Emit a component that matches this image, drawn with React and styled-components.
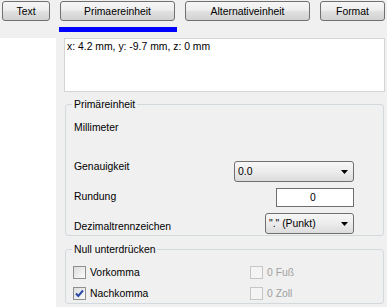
import React from 'react'
import styled, {createGlobalStyle} from 'styled-components'

const GlobalStyle = createGlobalStyle`
  html, body {
    margin: 0;
    padding: 0;
    background: #f0f0f0;
  }
  body {
    font-family: "Liberation Sans", Arial, sans-serif;
    font-size: 10.4px;
    line-height: 13px;
    color: #000;
  }
`

const Window = styled.div`
  width: 387px;
  height: 307px;
  display: flex;
  flex-direction: column;
  background: #f0f0f0;
  overflow: hidden;
`

const Header = styled.div`
  height: 38px;
  flex: none;
  display: flex;
  flex-direction: column;
`

const Toolbar = styled.div`
  display: flex;
  gap: 10px;
  padding: 1px 0 0 2px;
`

const TabButton = styled.button`
  width: ${p => p.$w}px;
  height: 20px;
  box-sizing: border-box;
  margin: 0;
  padding: 0;
  border: 1px solid #707070;
  border-radius: 3px;
  background: linear-gradient(#f6f6f6, #eeeeee 45%, #dfdfdf 55%, #d2d2d2);
  font: inherit;
  color: #000;
  text-align: center;
`

const Indicator = styled.div`
  margin: 6px 0 0 59px;
  width: 118px;
  height: 5px;
  background: #0000ff;
`

const Body = styled.div`
  flex: 1;
  display: flex;
`

const Sidebar = styled.div`
  width: 56px;
  background: #fff;
`

const Content = styled.div`
  flex: 1;
  display: flex;
  flex-direction: column;
  padding: 0 2px 0 8px;
`

const Readout = styled.div`
  height: 54px;
  box-sizing: border-box;
  background: #fff;
  border: 1px solid #d4d4d4;
  padding: 1px 2px;
`

const Group = styled.fieldset`
  margin: ${p => p.$top}px 1px 0 1px;
  padding: 0;
  border: 1px solid #d3dade;
  border-radius: 3px;
  min-width: 0;
`

const Caption = styled.legend`
  margin-left: 6px;
  padding: 0 2px;
  line-height: 13px;
`

const GroupBody = styled.div`
  padding: ${p => p.$pad};
`

const Line = styled.div`
  margin-top: ${p => p.$top || 0}px;
`

const Row = styled.div`
  display: flex;
  justify-content: space-between;
  align-items: flex-start;
  margin-top: ${p => p.$top}px;
`

const Label = styled.div`
  margin-top: ${p => p.$dy || 0}px;
`

const Dropdown = styled.div`
  width: ${p => p.$w}px;
  height: 21px;
  box-sizing: border-box;
  border: 1px solid #707070;
  border-radius: 3px;
  background: linear-gradient(#f7f7f7, #ececec 50%, #dcdcdc);
  display: flex;
  align-items: center;
  justify-content: space-between;
  padding: 0 5px 0 3px;
`

const Arrow = styled.svg`
  width: 7px;
  height: 4px;
  display: block;
`

const NumberBox = styled.div`
  width: 78px;
  height: 19px;
  box-sizing: border-box;
  border: 1px solid #6e6e6e;
  background: #fff;
  display: flex;
  align-items: center;
  justify-content: center;
  padding-right: 4px;
`

const CheckGrid = styled.div`
  display: grid;
  grid-template-columns: 177px 1fr;
  row-gap: 8px;
  margin-top: 10px;
`

const CheckItem = styled.div`
  display: flex;
  align-items: center;
  gap: 4px;
  height: 13px;
  color: ${p => p.$disabled ? '#a0a0a0' : '#000'};
`

const Box = styled.span`
  width: 13px;
  height: 13px;
  box-sizing: border-box;
  flex: none;
  border: 1px solid ${p => p.$disabled ? '#c6c6c6' : '#8e8f8f'};
  background: ${p => p.$disabled
    ? '#f4f4f4'
    : 'linear-gradient(135deg, #dcdcdc, #f2f2f2 70%, #fafafa)'};
  display: flex;
  align-items: center;
  justify-content: center;
`

const Check = ({checked, disabled, children}) => (
  <CheckItem $disabled={disabled}>
    <Box $disabled={disabled}>
      {checked && (
        <svg width="11" height="11" viewBox="0 0 11 11">
          <path d="M2 5.5 L4.3 8 L9 2.5" fill="none" stroke="#2a4aa8" strokeWidth="2" />
        </svg>
      )}
    </Box>
    <span>{children}</span>
  </CheckItem>
)

const Select = ({w, children}) => (
  <Dropdown $w={w}>
    <span>{children}</span>
    <Arrow viewBox="0 0 7 4">
      <polygon points="0,0 7,0 3.5,4" fill="#000" />
    </Arrow>
  </Dropdown>
)

export default function App () {
  return (
    <Window>
      <GlobalStyle />
      <Header>
        <Toolbar>
          <TabButton $w={48}>Text</TabButton>
          <TabButton $w={115}>Primaereinheit</TabButton>
          <TabButton $w={125}>Alternativeinheit</TabButton>
          <TabButton $w={65}>Format</TabButton>
        </Toolbar>
        <Indicator />
      </Header>
      <Body>
        <Sidebar />
        <Content>
          <Readout>x: 4.2 mm, y: -9.7 mm, z: 0 mm</Readout>
          <Group $top={6}>
            <Caption>Primäreinheit</Caption>
            <GroupBody $pad="0 29px 1px 8px">
              <Line $top={10}>Millimeter</Line>
              <Row $top={27}>
                <Label $dy={-1}>Genauigkeit</Label>
                <Select w={120}>0.0</Select>
              </Row>
              <Row $top={6}>
                <Label $dy={2}>Rundung</Label>
                <NumberBox>0</NumberBox>
              </Row>
              <Row $top={6}>
                <Label $dy={7}>Dezimaltrennzeichen</Label>
                <Select w={89}>"." (Punkt)</Select>
              </Row>
            </GroupBody>
          </Group>
          <Group $top={7}>
            <Caption>Null unterdrücken</Caption>
            <GroupBody $pad="0 0 3px 7px">
              <CheckGrid>
                <Check>Vorkomma</Check>
                <Check disabled>0 Fuß</Check>
                <Check checked>Nachkomma</Check>
                <Check disabled>0 Zoll</Check>
              </CheckGrid>
            </GroupBody>
          </Group>
        </Content>
      </Body>
    </Window>
  )
}
